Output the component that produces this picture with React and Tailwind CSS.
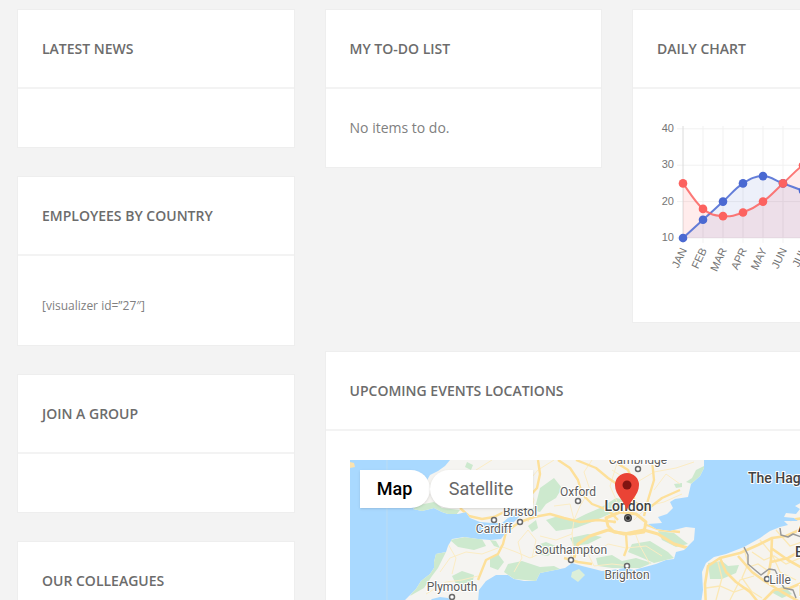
import React from 'react';

const months = ['JAN', 'FEB', 'MAR', 'APR', 'MAY', 'JUN', 'JUL', 'AUG'];

const series = [
  { id: 'red', color: '#fc625f', fill: 'rgba(252,98,95,0.12)', values: [25, 18, 16, 17, 20, 25, 30, 33] },
  { id: 'blue', color: '#4a69d2', fill: 'rgba(74,105,210,0.1)', values: [10, 15, 20, 25, 27, 25, 23, 21] },
];

const chartX = (i) => 26 + i * 20;
const chartY = (v) => 120 - (v - 10) * 3.64;

const curve = (values) => {
  const p = values.map((v, i) => [chartX(i), chartY(v)]);
  let d = `M${p[0][0]} ${p[0][1]}`;
  for (let i = 0; i < p.length - 1; i++) {
    const a = p[i - 1] || p[i];
    const b = p[i];
    const c = p[i + 1];
    const e = p[i + 2] || c;
    d += ` C${b[0] + (c[0] - a[0]) / 5} ${b[1] + (c[1] - a[1]) / 5} ${c[0] - (e[0] - b[0]) / 5} ${c[1] - (e[1] - b[1]) / 5} ${c[0]} ${c[1]}`;
  }
  return d;
};

const DailyChart = () => (
  <svg
    viewBox="0 0 230 175"
    preserveAspectRatio="xMinYMin slice"
    className="block h-[175px] w-full font-['Liberation_Sans',sans-serif] text-[11px]"
    role="img"
    aria-label="Daily chart"
  >
    {[10, 20, 30, 40].map((v) => (
      <g key={v}>
        <path d={`M20 ${chartY(v)}H230`} stroke="#f1f1f1" />
        <text x="17" y={chartY(v) + 3} textAnchor="end" fill="#757575">{v}</text>
      </g>
    ))}
    {months.map((m, i) => (
      <g key={m}>
        <path d={`M${chartX(i)} 8V125`} stroke={i === 0 ? '#dcdcdc' : '#f1f1f1'} />
        <text
          textAnchor="end"
          fill="#757575"
          transform={`translate(${chartX(i) + 4} 132) rotate(-65)`}
        >
          {m}
        </text>
      </g>
    ))}
    {series.map((s) => (
      <path
        key={s.id}
        d={`${curve(s.values)} V120 H26 Z`}
        fill={s.fill}
      />
    ))}
    {[...series].reverse().map((s) => (
      <path key={s.id} d={curve(s.values)} fill="none" stroke={s.color} strokeWidth="2" opacity="0.85" />
    ))}
    {[...series].reverse().map((s) =>
      s.values.map((v, i) => (
        <circle key={`${s.id}-${i}`} cx={chartX(i)} cy={chartY(v)} r="4.3" fill={s.color} />
      ))
    )}
  </svg>
);

const cities = [
  { name: 'Plymouth', x: 102, y: 131, dot: [102, 137] },
  { name: 'Cardiff', x: 144, y: 73, dot: [144, 60] },
  { name: 'Bristol', x: 170, y: 56, dot: [170, 62] },
  { name: 'Oxford', x: 228, y: 36, dot: [228, 41] },
  { name: 'Southampton', x: 221, y: 94, dot: [221, 100] },
  { name: 'Brighton', x: 277, y: 119, dot: [277, 106] },
  { name: 'Cambridge', x: 288, y: 4, dot: [288, 9] },
  { name: 'Lille', x: 430, y: 124, dot: [417, 119] },
];

const EventsMap = () => (
  <svg
    viewBox="0 0 540 340"
    preserveAspectRatio="xMinYMin slice"
    className="block h-[340px] w-full font-['Roboto',sans-serif]"
    role="img"
    aria-label="Map of event locations"
  >
    <defs>
      <clipPath id="england">
        <path d="M100 0L95 6 88 11 80 15 76 22 79 34 70 43 63 49 72 51 84 48 92 52 98 54 108 54 116 52 120 58 130 62 142 63 152 63 158 58 166 54 170 56 162 64 157 71 151 79 140 80 128 79 114 77 102 79 98 86 96 92 86 94 84 102 84 108 80 114 71 121 66 129 59 136 52 143 40 156 70 150 82 139 90 137 98 138 108 146 122 150 128 142 129 130 136 121 146 115 158 115 164 119 174 121 186 121 190 113 205 110 215 108 222 103 232 106 240 108 252 111 262 110 275 108 284 110 295 107 306 104 316 100 324 99 326 92 334 90 344 80 345 68 336 67 320 71 306 69 298 64 312 63 308 57 317 54 323 48 320 42 325 39 338 37 341 24 350 16 354 8 354 0Z" />
      </clipPath>
      <clipPath id="continent">
        <path d="M350 150L353 130 352 112 356 103 364 97 376 94 394 87 410 78 420 71 430 67 438 65 434 61 448 61 444 58 434 57 436 53 446 54 450 49 445 46 452 42 466 36 480 22 492 0H540V340H350Z" />
      </clipPath>
    </defs>

    <path d="M0 0H540V340H0Z" fill="#a9d9ff" />
    <path d="M37 0V340" stroke="#bcdcf2" />
    <path d="M0 2L4 3 5 7 0 8Z" fill="#fbe3b0" />

    <g clipPath="url(#england)">
      <path d="M0 0H360V160H0Z" fill="#f5f4f1" />
      <g fill="#cde9ce">
        <path d="M64 46L84 42 92 48 110 50 106 55H62Z" />
        <path d="M100 80L115 77 132 79 136 86 124 90 108 87Z" />
        <path d="M96 92L84 93 84 108 70 121 60 136 74 128 82 116 88 108Z" />
        <path d="M102 116L112 111 124 115 122 126 106 124Z" />
        <path d="M140 99L148 94 154 102 148 110 140 107Z" />
        <path d="M140 80L146 81 150 88 144 86Z" />
        <path d="M154 112L158 104 172 101 190 107 204 106 212 110 186 121 164 119Z" />
        <path d="M184 86L196 82 208 87 198 96 186 94Z" />
        <path d="M186 44L190 28 204 18 212 28 206 38 196 44 190 52 182 50Z" />
        <path d="M196 60L208 56 224 60 236 54 250 48 266 38 276 40 264 52 242 62 226 68 206 71Z" />
        <path d="M196 40L210 32 206 24 196 34Z" />
        <path d="M220 78L238 74 252 77 238 84 224 86Z" />
        <path d="M246 98L262 95 272 101 286 98 302 103 290 108 262 108 248 106Z" />
        <path d="M282 84L300 81 318 92 324 98 304 103 288 96 278 92Z" />
        <path d="M308 71L324 73 338 84 326 87 312 80Z" />
        <path d="M324 24L332 23 332 27 326 28Z" />
        <path d="M354 6L346 10 342 18 336 22 342 24 354 14Z" />
        <path d="M178 66L186 60 188 68 182 72Z" />
        <path d="M117 2L123 5 121 10 115 7Z" />
      </g>
      <g fill="none" stroke="#fbecc4" strokeWidth="1">
        <path d="M100 12L120 18 134 30 150 36 162 50M104 30L126 10 142 0M110 48L126 36 146 44" />
        <path d="M90 112L100 98 116 92 132 94 148 88M76 134L96 122 112 120 128 116M98 84L106 98 102 114" />
        <path d="M150 86L166 92 180 98 194 92 212 88 222 96M164 112L172 98 168 82 178 70 186 80 182 98" />
        <path d="M178 62L184 40 176 24 188 10 204 0M190 76L206 80 222 74 224 60 220 44 204 46" />
        <path d="M224 60L230 46 240 30 234 12 242 0M224 96L222 72M236 90L244 106 262 104 280 106" />
        <path d="M246 92L258 84 276 88 296 86 312 96M264 64L268 44 260 26 268 0M284 70L290 86 300 104" />
        <path d="M262 10L284 24 304 12 326 8 344 2M304 30L316 14 330 24M284 60L298 46 314 42 332 34" />
      </g>
      <g fill="none" stroke="#fde09a" strokeWidth="2.4" strokeLinejoin="round">
        <path d="M110 48L119 56 132 59 144 57 154 52 162 50" />
        <path d="M128 120L136 100 148 94 153 84 156 72 164 66 170 62 184 57 200 54 214 58 230 62 248 60 266 62" />
        <path d="M188 0L190 14 187 28 178 38M208 0L220 8 228 20 232 34 242 44 258 50 268 60" />
        <path d="M226 0L246 8 258 18 270 26 280 38M262 0L278 10 284 24 284 42 294 46" />
        <path d="M302 0L304 20 298 40 294 56M294 52L312 38 330 30" />
        <path d="M256 58L270 52 286 54 296 62 294 72 280 74 264 72 258 66Z" strokeWidth="3" />
        <path d="M224 98L228 84 240 76 258 70 274 74 294 70 308 74 324 84 338 88" strokeWidth="3" />
        <path d="M276 74L277 88 274 96M214 98L228 102 242 104M294 64L310 70 330 72" />
      </g>
    </g>

    <path d="M222 112L229 109 235 115 228 122 221 117Z" fill="#dcefd9" />

    <g clipPath="url(#continent)">
      <path d="M340 0H540V340H340Z" fill="#f6f4ef" />
      <g fill="#cde9ce">
        <path d="M358 103L372 101 378 106 389 105 386 113 372 119 360 119Z" />
        <path d="M421 132L434 126 442 134 432 138Z" />
      </g>
      <g fill="none" stroke="#fbe8b5" strokeWidth="1.3">
        <path d="M356 128L370 126 384 132 396 128 412 138M368 102L372 118 366 140M394 88L398 104 392 118 402 132" />
        <path d="M402 92L414 100 424 96 436 104 450 98M410 80L422 94 430 112 446 120M396 108L408 104 420 112" />
        <path d="M380 140L390 120 404 116M426 70L440 86 452 82" />
      </g>
      <g fill="none" stroke="#fde09a" strokeWidth="2.6" strokeLinejoin="round">
        <path d="M356 150L355 124 358 106 370 98 390 93 408 85 422 78 436 76 454 68" />
        <path d="M370 98L376 112 386 122 400 132 408 142M388 96L402 112 416 122 432 132 450 142" />
        <path d="M422 78L421 100 418 118M421 88L438 100 452 108M421 102L438 98 452 90" />
        <path d="M412 142L424 130 440 128 454 122M440 60L454 58" />
      </g>
      <path
        d="M394 87L398 95 398 104 405 110 411 115 419 109 425 110 430 120 434 128 443 130 446 138M430 68L431 75 438 77 443 74 454 78"
        fill="none"
        stroke="#9a9a9a"
        strokeWidth="1.5"
        strokeLinejoin="round"
      />
    </g>

    <g fill="#fff" stroke="#6a6a6a" strokeWidth="1.5">
      {cities.map((c) => (
        <circle key={c.name} cx={c.dot[0]} cy={c.dot[1]} r="2.5" />
      ))}
    </g>
    <g fill="#5c5c5c" stroke="#fff" strokeWidth="2" strokeLinejoin="round" paintOrder="stroke" textAnchor="middle" fontSize="12">
      {cities.map((c) => (
        <text key={c.name} x={c.x} y={c.y}>{c.name}</text>
      ))}
    </g>

    <g fill="#424242" stroke="#fff" strokeWidth="2" strokeLinejoin="round" paintOrder="stroke" fontSize="14" fontWeight="500">
      <text x="278" y="51" textAnchor="middle">London</text>
      <text x="398" y="23">The Hague</text>
      <text x="448" y="72">Antwerp</text>
      <text x="445" y="97">Brussels</text>
      <text x="449" y="136">Belgium</text>
    </g>

    <circle cx="278" cy="58" r="4" fill="#444" />
    <circle cx="278" cy="58" r="2.4" fill="#222" stroke="#999" strokeWidth="0.8" />
    <path d="M277 51C276 42 265 36 265 25A12 12 0 0 1 289 25C289 36 278 42 277 51Z" fill="#ea4335" />
    <circle cx="277" cy="25" r="4.5" fill="#811411" />
  </svg>
);

const Card = ({ title, children }) => (
  <section className="border border-[#eeeeee] bg-white">
    <h2 className="border-b-2 border-[#f3f3f3] px-6 pt-[29px] pb-7 text-sm leading-5 font-semibold text-[#6c6c6c] uppercase">
      {title}
    </h2>
    <div className="px-6 py-[29px]">{children}</div>
  </section>
);

const App = () => (
  <main className="min-h-screen overflow-x-hidden bg-[#f3f3f3] pt-[9px] pb-7 pl-[17px] font-['Open_Sans',sans-serif] text-[#808080]">
    <div className="grid w-[114%] grid-cols-3 items-start gap-x-[30px] gap-y-7">
      <div className="flex flex-col gap-7">
        <Card title="Latest News" />
        <Card title="Employees by Country">
          <p className="pt-[11px] text-xs leading-5">[visualizer id=”27″]</p>
        </Card>
        <Card title="Join a Group" />
        <Card title="Our Colleagues" />
      </div>

      <div className="col-span-2 flex flex-col gap-7">
        <div className="grid grid-cols-2 items-start gap-x-[30px] gap-y-7">
          <Card title="My To-Do List">
            <p className="text-sm leading-5">No items to do.</p>
          </Card>
          <Card title="Daily Chart">
            <DailyChart />
          </Card>
        </div>
        <Card title="Upcoming Events Locations">
          <div className="relative">
            <EventsMap />
            <div className="absolute top-2.5 left-2.5 flex font-['Roboto',sans-serif] text-lg">
              <button type="button" className="h-[38px] w-[70px] rounded-r-full bg-white font-medium text-black shadow">
                Map
              </button>
              <button type="button" className="h-[38px] w-[103px] rounded-l-full bg-white text-[#666] shadow">
                Satellite
              </button>
            </div>
          </div>
        </Card>
      </div>
    </div>
  </main>
);

export default App;
